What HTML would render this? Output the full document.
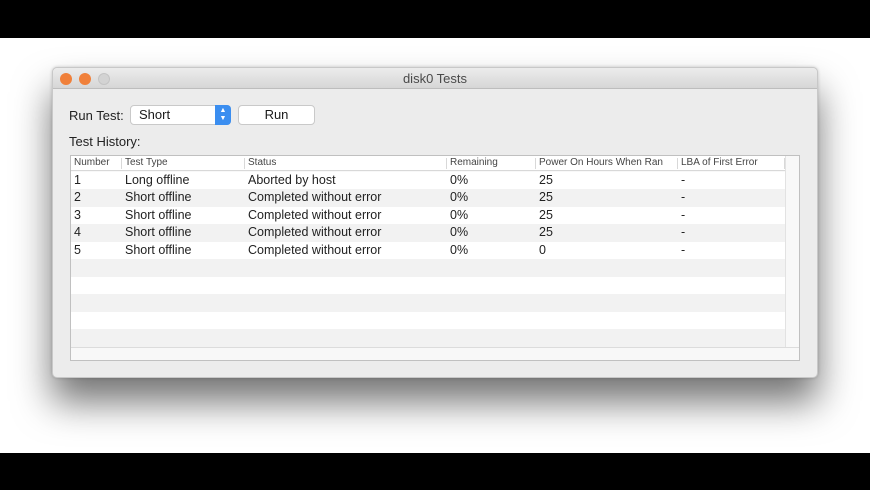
<!DOCTYPE html>
<html><head><style>
*{margin:0;padding:0;box-sizing:border-box}
body{width:870px;height:490px;background:#fff;position:relative;overflow:hidden;font-family:"Liberation Sans",sans-serif;color:#1a1a1a}
.bar{position:absolute;left:0;width:870px;background:#000}
.win{position:absolute;left:52px;top:67px;width:766px;height:311px;background:#ececec;border:1px solid #c8c8c8;border-radius:5px;box-shadow:0 24px 38px rgba(0,0,0,0.55),0 0 3px rgba(0,0,0,0.2)}
.tb{position:absolute;left:0;top:0;width:764px;height:21px;background:linear-gradient(#ececec,#d6d6d6);border-bottom:1px solid #bdbdbd;border-radius:5px 5px 0 0;text-align:center;font-size:13px;line-height:21px;color:#4a4a4a}
.dot{position:absolute;top:5px;width:12px;height:12px;border-radius:50%}
.t{position:absolute;font-size:13px;white-space:nowrap;color:#222}
.pop{position:absolute;left:77px;top:37px;width:101px;height:20px;background:#fff;border:1px solid #c9c9c9;border-radius:4px;font-size:13px;line-height:18px;padding-left:8px}
.pop .arr{position:absolute;right:-1px;top:-1px;width:16px;height:20px;background:#3b8ef0;border-radius:0 4px 4px 0;color:#fff;font-size:7px;line-height:8px;text-align:center;padding-top:2px}
.btn{position:absolute;left:185px;top:37px;width:77px;height:20px;background:#fff;border:1px solid #c9c9c9;border-radius:4px;font-size:13px;line-height:18px;text-align:center}
.tbl{position:absolute;left:17px;top:87px;width:730px;height:206px;background:#f8f8f8;border:1px solid #c0c0c0;overflow:hidden}
.hd{position:absolute;left:0;top:0;width:714px;height:15px;background:#fff;border-bottom:1px solid #d8d8d8;font-size:10px;color:#444}
.hd span{position:absolute;top:1px}
.sep{position:absolute;top:2px;width:1px;height:11px;background:#d8d8d8}
.row{position:absolute;left:0;width:714px;height:17.5px;font-size:12.5px;line-height:17.5px;color:#222}
.row span{position:absolute}
.g{background:#f2f2f2}.w{background:#fff}
</style></head><body>
<div class="bar" style="top:0;height:38px"></div>
<div class="bar" style="top:453px;height:37px"></div>
<div class="win">
<div class="tb">disk0 Tests
<div class="dot" style="left:7px;background:#f0803a"></div>
<div class="dot" style="left:26px;background:#f0803a"></div>
<div class="dot" style="left:45px;background:#d3d3d3;border:1px solid #c4c4c4"></div>
</div>
<div class="t" style="left:16px;top:40px">Run Test:</div>
<div class="pop">Short<div class="arr">▲<br>▼</div></div>
<div class="btn">Run</div>
<div class="t" style="left:16px;top:66px">Test History:</div>
<div class="tbl">
<div class="hd">
<span style="left:3px">Number</span><div class="sep" style="left:50px"></div>
<span style="left:54px">Test Type</span><div class="sep" style="left:173px"></div>
<span style="left:177px">Status</span><div class="sep" style="left:375px"></div>
<span style="left:379px">Remaining</span><div class="sep" style="left:464px"></div>
<span style="left:468px">Power On Hours When Ran</span><div class="sep" style="left:606px"></div>
<span style="left:610px">LBA of First Error</span><div class="sep" style="left:713px"></div>
</div>
<div class="row w" style="top:15.5px"><span style="left:3px">1</span><span style="left:54px">Long offline</span><span style="left:177px">Aborted by host</span><span style="left:379px">0%</span><span style="left:468px">25</span><span style="left:610px">-</span></div>
<div class="row g" style="top:33px"><span style="left:3px">2</span><span style="left:54px">Short offline</span><span style="left:177px">Completed without error</span><span style="left:379px">0%</span><span style="left:468px">25</span><span style="left:610px">-</span></div>
<div class="row w" style="top:50.5px"><span style="left:3px">3</span><span style="left:54px">Short offline</span><span style="left:177px">Completed without error</span><span style="left:379px">0%</span><span style="left:468px">25</span><span style="left:610px">-</span></div>
<div class="row g" style="top:68px"><span style="left:3px">4</span><span style="left:54px">Short offline</span><span style="left:177px">Completed without error</span><span style="left:379px">0%</span><span style="left:468px">25</span><span style="left:610px">-</span></div>
<div class="row w" style="top:85.5px"><span style="left:3px">5</span><span style="left:54px">Short offline</span><span style="left:177px">Completed without error</span><span style="left:379px">0%</span><span style="left:468px">0</span><span style="left:610px">-</span></div>
<div class="row g" style="top:103px"></div>
<div class="row w" style="top:120.5px"></div>
<div class="row g" style="top:138px"></div>
<div class="row w" style="top:155.5px"></div>
<div class="row g" style="top:173px"></div>
<div style="position:absolute;left:0;top:190.5px;width:730px;height:1px;background:#dcdcdc"></div>
<div style="position:absolute;left:714px;top:0;width:1px;height:191px;background:#e2e2e2"></div>
</div>
</div>
</body></html>
